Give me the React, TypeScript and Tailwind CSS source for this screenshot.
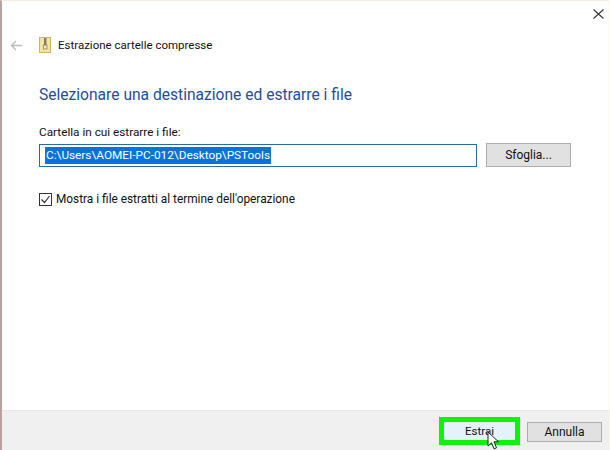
export default function App() {
  return (
    <div className="w-[610px] h-[450px] bg-white flex flex-col overflow-hidden border-l-2 border-t border-r border-[#b9a29c] border-t-[#f8ebe4] border-r-[#fdf6ec] text-[12px] leading-4 text-[#111] [font-family:'Roboto','Open_Sans',sans-serif]">
      <div className="h-[410px] flex flex-col border-b border-[#e6e6e6]">
        <div className="h-[29px] flex justify-end items-start pt-[8px] pr-[5px]">
          <svg width="11" height="10" viewBox="0 0 11 10" fill="none" stroke="#333" strokeWidth="1.1"><path d="M0.5 0.5l10 9M10.5 0.5l-10 9" /></svg>
        </div>
        <div className="h-[30px] flex items-center pl-[8px]">
          <svg width="12" height="11" viewBox="0 0 12 11" fill="none" stroke="#bdbdbd" strokeWidth="1.4"><path d="M12 5.5H1.5M6 1L1.5 5.5 6 10" /></svg>
          <svg className="ml-[17px]" width="12" height="16" viewBox="0 0 12 16">
            <rect x="0.5" y="0.5" width="11" height="15" fill="#f5e59c" stroke="#cdb765" />
            <rect x="5" y="1" width="2.5" height="11" fill="#8a8060" />
            <rect x="4.5" y="8" width="3.5" height="4" fill="#e8e8d8" stroke="#6b6445" strokeWidth="0.6" />
          </svg>
          <span className="ml-[7px] text-[11.5px]">Estrazione cartelle compresse</span>
        </div>
        <div className="pl-[37px] pr-[37px] pt-[24px]">
          <h1 className="text-[15.6px] leading-[22px] text-[#1f4e9a] font-normal">Selezionare una destinazione ed estrarre i file</h1>
          <div className="mt-[18px] text-[11.75px]">Cartella in cui estrarre i file:</div>
          <div className="mt-[3px] flex items-center gap-[9px]">
            <div className="w-[438px] h-[23px] border border-[#2a6aa8] flex items-center pl-[5px]">
              <span className="bg-[#0a74d6] text-white text-[11.8px] leading-[17px] px-px">C:\Users\AOMEI-PC-012\Desktop\PSTools</span>
            </div>
            <button className="w-[85px] h-[24px] bg-[#e1e1e1] border border-[#adadad] text-[12px]">Sfoglia...</button>
          </div>
          <label className="mt-[24px] flex items-center gap-[4px] text-[11.85px]">
            <span className="w-[13px] h-[13px] border border-[#333] flex items-center justify-center bg-white">
              <svg width="11" height="11" viewBox="0 0 11 11" fill="none" stroke="#333" strokeWidth="1.2"><path d="M1.5 5.5l3 3 5-6.5" /></svg>
            </span>
            Mostra i file estratti al termine dell'operazione
          </label>
        </div>
      </div>
      <div className="flex-1 bg-[#f0f0f0] flex justify-end items-start pt-[6px] pr-[7px] gap-[7px]">
        <div className="relative">
          <button className="w-[81px] h-[28px] border-[5px] border-[#0ef20e] bg-[#e5f1fb] text-[11.5px]">Estrai</button>
          <svg className="absolute left-[48px] top-[14px]" width="13" height="19" viewBox="0 0 13 19">
            <path d="M1 1v14l3.5-3.2 2.5 6 2.5-1-2.5-6H11.5z" fill="#fff" stroke="#222" strokeWidth="1" />
          </svg>
        </div>
        <button className="mt-[5px] w-[75px] h-[20px] bg-[#e1e1e1] border border-[#adadad] text-[12px]">Annulla</button>
      </div>
    </div>
  );
}
